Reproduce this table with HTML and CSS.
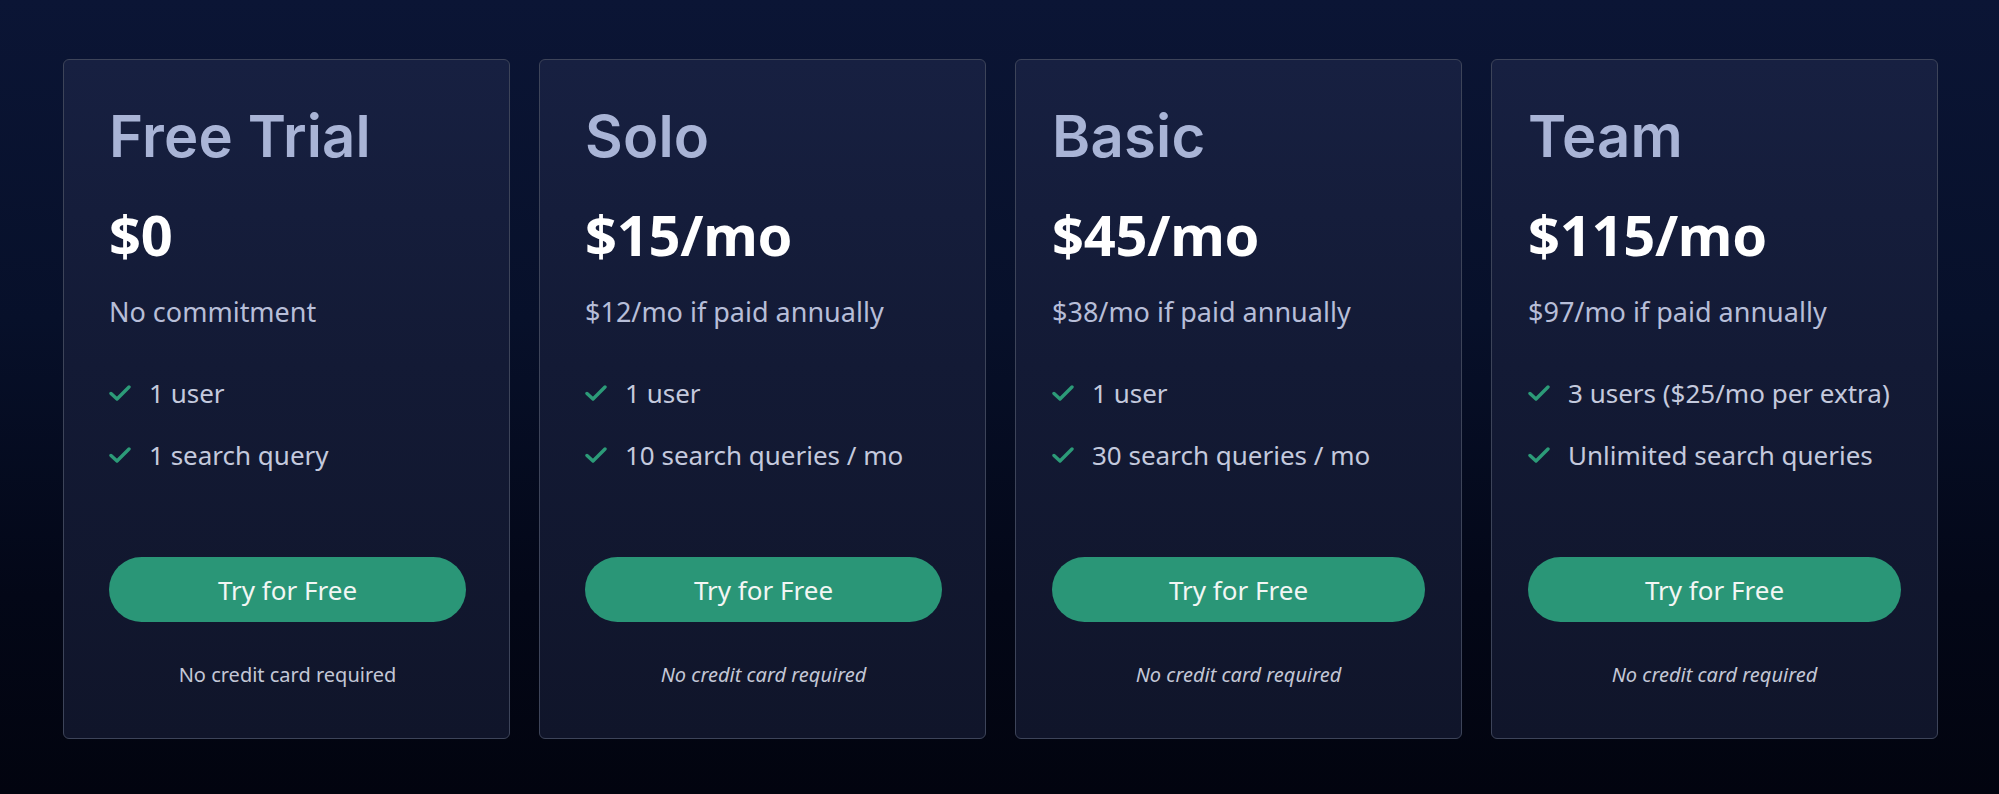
FILE: index.html
```html
<!DOCTYPE html>
<html lang="en">
<head>
<meta charset="utf-8">
<title>Pricing</title>
<link rel="stylesheet" href="styles.css">
</head>
<body>
<main class="pricing">
  <section class="card">
    <h2 class="plan">Free Trial</h2>
    <div class="price">$0</div>
    <p class="sub">No commitment</p>
    <ul class="features">
      <li><svg class="check" viewBox="0 0 22 16"><path d="M2 8.5 L8 14 L20 2"/></svg>1 user</li>
      <li><svg class="check" viewBox="0 0 22 16"><path d="M2 8.5 L8 14 L20 2"/></svg>1 search query</li>
    </ul>
    <a class="btn" href="#">Try for Free</a>
    <p class="note">No credit card required</p>
  </section>
  <section class="card">
    <h2 class="plan">Solo</h2>
    <div class="price">$15/mo</div>
    <p class="sub">$12/mo if paid annually</p>
    <ul class="features">
      <li><svg class="check" viewBox="0 0 22 16"><path d="M2 8.5 L8 14 L20 2"/></svg>1 user</li>
      <li><svg class="check" viewBox="0 0 22 16"><path d="M2 8.5 L8 14 L20 2"/></svg>10 search queries / mo</li>
    </ul>
    <a class="btn" href="#">Try for Free</a>
    <p class="note note--italic">No credit card required</p>
  </section>
  <section class="card card--wide">
    <h2 class="plan">Basic</h2>
    <div class="price">$45/mo</div>
    <p class="sub">$38/mo if paid annually</p>
    <ul class="features">
      <li><svg class="check" viewBox="0 0 22 16"><path d="M2 8.5 L8 14 L20 2"/></svg>1 user</li>
      <li><svg class="check" viewBox="0 0 22 16"><path d="M2 8.5 L8 14 L20 2"/></svg>30 search queries / mo</li>
    </ul>
    <a class="btn" href="#">Try for Free</a>
    <p class="note note--italic">No credit card required</p>
  </section>
  <section class="card card--wide">
    <h2 class="plan">Team</h2>
    <div class="price">$115/mo</div>
    <p class="sub">$97/mo if paid annually</p>
    <ul class="features">
      <li><svg class="check" viewBox="0 0 22 16"><path d="M2 8.5 L8 14 L20 2"/></svg>3 users ($25/mo per extra)</li>
      <li><svg class="check" viewBox="0 0 22 16"><path d="M2 8.5 L8 14 L20 2"/></svg>Unlimited search queries</li>
    </ul>
    <a class="btn" href="#">Try for Free</a>
    <p class="note note--italic">No credit card required</p>
  </section>
</main>
</body>
</html>
```
FILE: styles.css
```css
* { box-sizing: border-box; }
html, body {
  margin: 0;
  height: 100%;
}
body {
  background: linear-gradient(180deg, #0b1535 0%, #07102a 40%, #030717 75%, #02040f 100%);
  font-family: "Noto Sans", "Liberation Sans", sans-serif;
  color: #c3c8dc;
}
.pricing {
  display: grid;
  grid-template-columns: repeat(4, minmax(0, 1fr));
  gap: 29px;
  padding: 59px 61px 55px 63px;
}
.card {
  display: flex;
  flex-direction: column;
  border: 1.5px solid #3d4459;
  border-radius: 6px;
  background: linear-gradient(180deg, #172041 0%, #131a35 45%, #10152a 100%);
  padding: 41px 43px 49px 45px;
}
.card--wide {
  padding-left: 36px;
  padding-right: 36px;
}
.plan {
  margin: 0;
  font-family: "Inter", "Liberation Sans", sans-serif;
  font-weight: 600;
  font-size: 58px;
  line-height: 70px;
  color: #a9b4d6;
  letter-spacing: 0.2px;
}
.price {
  margin-top: 31px;
  font-weight: 700;
  font-size: 56px;
  line-height: 64px;
  color: #ffffff;
  letter-spacing: -0.3px;
}
.sub {
  margin: 26px 0 0;
  font-size: 27px;
  line-height: 40px;
  color: #b7bed8;
}
.features {
  list-style: none;
  margin: 42px 0 0;
  padding: 0;
  display: flex;
  flex-direction: column;
  gap: 24px;
}
.features li {
  display: flex;
  align-items: center;
  font-size: 26px;
  line-height: 38px;
  color: #c4c9dd;
}
.check {
  width: 22px;
  height: 16px;
  margin-right: 18px;
  flex: none;
  fill: none;
  stroke: #2c9b78;
  stroke-width: 3.4;
  stroke-linecap: round;
  stroke-linejoin: round;
}
.btn {
  margin-top: 83px;
  height: 65px;
  border-radius: 33px;
  background: #2a9677;
  color: #f2f6f4;
  font-size: 26px;
  display: flex;
  align-items: center;
  justify-content: center;
  text-decoration: none;
}
.note {
  margin: 39px 0 0;
  font-size: 20px;
  line-height: 28px;
  text-align: center;
  color: #c3c7d6;
}
.note--italic {
  font-style: italic;
}
```
